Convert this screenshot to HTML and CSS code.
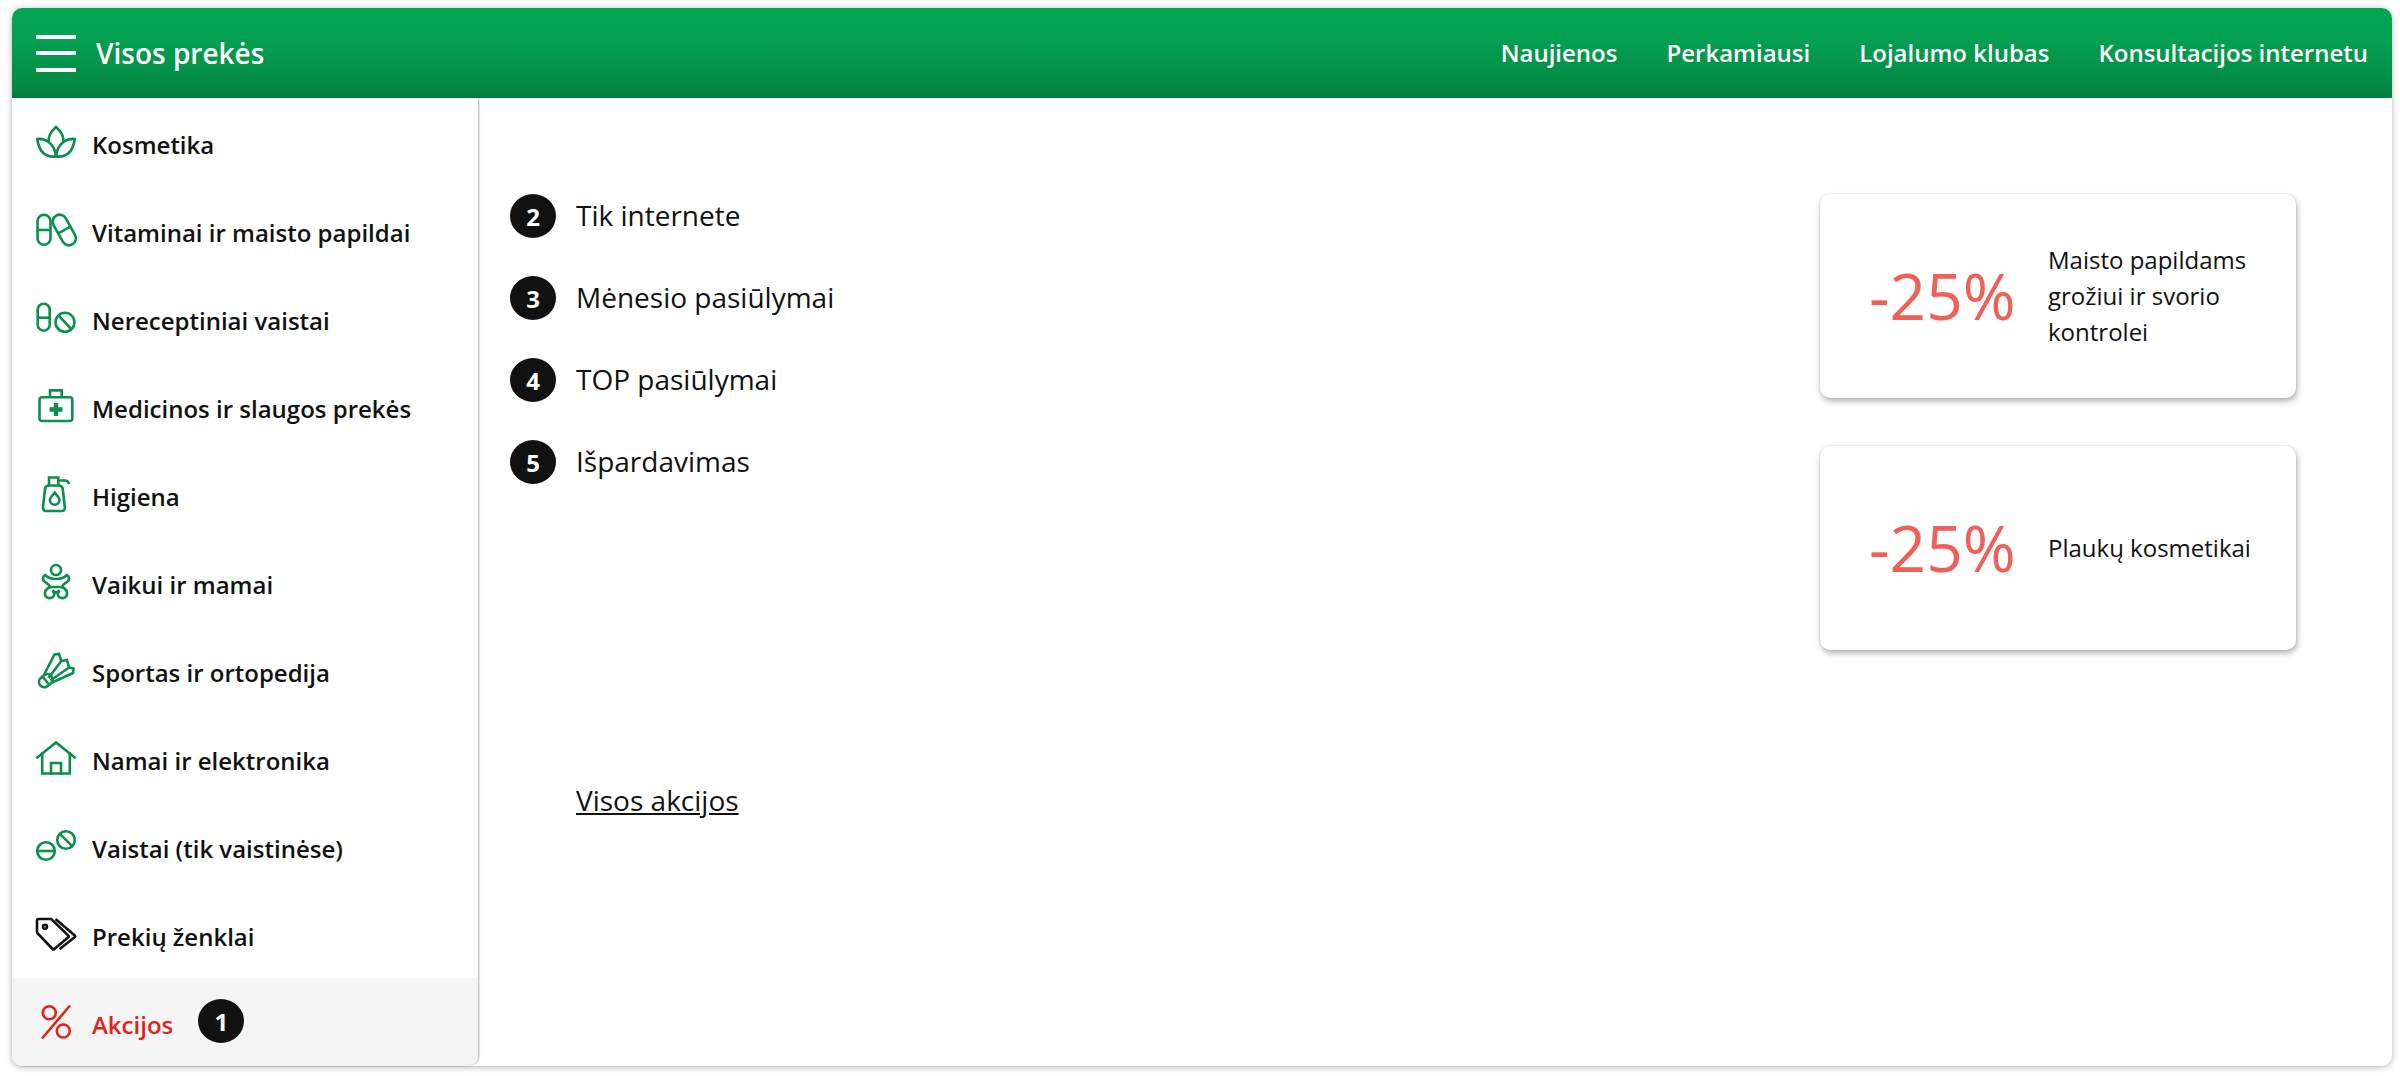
FILE: index.html
```html
<!DOCTYPE html>
<html lang="lt">
<head>
<meta charset="utf-8">
<title>Visos prekės</title>
<link rel="stylesheet" href="styles.css">
</head>
<body>
<div class="panel">
  <header class="topbar">
    <div class="brand">
      <span class="burger"><i></i><i></i><i></i></span>
      <span class="brand-text">Visos prekės</span>
    </div>
    <nav class="topnav">
      <a>Naujienos</a><a>Perkamiausi</a><a>Lojalumo klubas</a><a>Konsultacijos internetu</a>
    </nav>
  </header>
  <div class="body">
    <aside class="side">
      <a class="item"><svg class="ico" viewBox="0 0 40 40"><path d="M1.300 17C9 16 18.500 21 20 34.500 10 35.500 3 30 1.300 17z"/><path d="M38.700 17C31 16 21.500 21 20 34.500 30 35.500 37 30 38.700 17z"/><path d="M12.800 19.500C12 14 15.500 9 20 5c4.500 4 8 9 7.200 14.500"/></svg><span>Kosmetika</span></a>
      <a class="item"><svg class="ico" viewBox="0 0 40 40"><rect x="1.500" y="4.700" width="13" height="30" rx="6.500"/><path d="M1.500 20h13"/><rect x="21.300" y="3.500" width="14" height="33" rx="7" transform="rotate(-29 28.300 20)"/><path d="M21.800 23.600l12.600-7"/></svg><span>Vitaminai ir maisto papildai</span></a>
      <a class="item"><svg class="ico" viewBox="0 0 40 40"><rect x="1.700" y="5.700" width="12" height="27" rx="6"/><path d="M1.700 19.700h12"/><circle cx="29" cy="24.300" r="9.500"/><path d="M22.500 17.300l13 14"/></svg><span>Nereceptiniai vaistai</span></a>
      <a class="item"><svg class="ico" viewBox="0 0 40 40"><rect x="3.500" y="11.200" width="32.800" height="23.800" rx="2.500"/><path d="M14 11V4.400h11.700V11"/><path class="thick" d="M20 17v13M13.500 23.500h13"/></svg><span>Medicinos ir slaugos prekės</span></a>
      <a class="item"><svg class="ico" viewBox="0 0 40 40"><path d="M13 11.500h9.500c2.500 0 4 1.500 4.300 3.500l2 18c.2 2.500-1 4-3 4H10c-2 0-3-1.500-3-4l2-18c.3-2 2-3.500 4-3.500z"/><path d="M13 11.500V3.500h9.300v8"/><path d="M22.300 6.500h7c2 0 3 1.500 4 3.500"/><path d="M18.700 18.500c3 3.500 4.800 5.500 4.800 7.500a4.800 4.800 0 0 1-9.600 0c0-2 1.800-4 4.800-7.500z"/></svg><span>Higiena</span></a>
      <a class="item"><svg class="ico" viewBox="0 0 40 40"><circle cx="20" cy="8" r="5"/><path d="M9 13c2.500 2.500 6.500 4 11 4s8.500-1.500 11-4c2.500 1.500 2.500 5.500.5 6.700-2.700 1.500-4.500 2.500-5.500 5.300H14c-1-2.800-2.800-3.800-5.500-5.300C6.500 18.500 6.500 14.500 9 13z"/><path d="M14 25c-3 1.500-5.500 4.500-5 7.500.6 3.700 5.500 4.500 8 2.500 1.700-1.500 1.500-4.500-.5-6.500"/><path d="M26 25c3 1.500 5.500 4.500 5 7.500-.6 3.700-5.500 4.500-8 2.500-1.700-1.500-1.500-4.500.5-6.500"/><path d="M16.500 28.500c1 .8 2.300 1.500 3.500 2.300 1.200-.8 2.500-1.500 3.500-2.300"/></svg><span>Vaikui ir mamai</span></a>
      <a class="item"><svg class="ico" viewBox="0 0 40 40"><path d="M8 25L18.500 4.500l4.500-.5 2.300 7 5.700-1 2 7.500 4.500 1-.5 4.500L15 33"/><path d="M12.500 28L25.300 11M14.500 30.500L33 17.500"/><rect x="2.500" y="25.500" width="14.500" height="10.500" rx="5.200" transform="rotate(-40 9.700 30.700)"/><path d="M6.500 26.500l6.500 8"/></svg><span>Sportas ir ortopedija</span></a>
      <a class="item"><svg class="ico square" viewBox="0 0 40 40"><path d="M1.300 19.500L20 4.500l18.700 15"/><path d="M6.200 15.500V35.500h27.600V15.500"/><path d="M15 35.500V25h10v10.500"/></svg><span>Namai ir elektronika</span></a>
      <a class="item"><svg class="ico" viewBox="0 0 40 40"><circle cx="10" cy="25" r="8.800"/><path d="M1.200 25h17.600"/><circle cx="30" cy="14" r="8.800"/><path d="M23.800 7.800l12.400 12.400"/></svg><span>Vaistai (tik vaistinėse)</span></a>
      <a class="item"><svg class="ico dark" viewBox="0 0 40 40"><path d="M1 6.500C1 5.700 1.700 5 2.500 5H15.300L32.300 21.600c.5.500.5 1.200 0 1.700L18.300 35c-.5.500-1.200.5-1.700 0L1.600 19.300C1.200 19 1 18.500 1 18z"/><circle cx="9" cy="12.700" r="2"/><path d="M19.500 5l19.300 16.500c.5.500.5 1.100 0 1.600L23.500 35.300"/></svg><span>Prekių ženklai</span></a>
      <a class="item active"><svg class="ico red" viewBox="0 0 40 40"><path d="M34 3.500L6 36.500"/><circle cx="13.300" cy="10.700" r="6.500"/><circle cx="27.300" cy="29" r="6.500"/></svg><span>Akcijos</span><b class="dot dot-side">1</b></a>
    </aside>
    <main class="main">
      <div class="left">
        <ul class="list">
          <li><b class="dot">2</b><span>Tik internete</span></li>
          <li><b class="dot">3</b><span>Mėnesio pasiūlymai</span></li>
          <li><b class="dot">4</b><span>TOP pasiūlymai</span></li>
          <li><b class="dot">5</b><span>Išpardavimas</span></li>
        </ul>
        <a class="all">Visos akcijos</a>
      </div>
      <div class="cards">
        <div class="card"><span class="pct">-25%</span><p>Maisto papildams grožiui ir svorio kontrolei</p></div>
        <div class="card"><span class="pct">-25%</span><p>Plaukų kosmetikai</p></div>
      </div>
    </main>
  </div>
</div>
</body>
</html>
```
FILE: styles.css
```css
* { box-sizing: border-box; }
html, body { height: 100%; }
body {
  margin: 0;
  padding: 8px 8px 10px 12px;
  background: #fff;
  font-family: "Open Sans", sans-serif;
  color: #111;
}
.panel {
  width: 2380px;
  height: 1058px;
  display: flex;
  flex-direction: column;
  border-radius: 10px;
  background: #fff;
  box-shadow: 0 1px 6px rgba(0,0,0,.3);
}
.topbar {
  height: 90px;
  flex: none;
  display: flex;
  align-items: center;
  justify-content: space-between;
  padding: 0 24px;
  background: linear-gradient(#04a654 0%, #04a052 35%, #038a45 85%, #037f40 100%);
  border-radius: 10px 10px 0 0;
  color: #fff;
}
.brand { display: flex; align-items: center; gap: 20px; }
.burger { display: flex; flex-direction: column; gap: 12.5px; width: 40px; }
.burger i { display: block; height: 4px; background: #fff; }
.brand-text { font-size: 28px; font-weight: 600; line-height: 40px; }
.topnav { display: flex; gap: 49px; }
.topnav a { font-size: 24px; font-weight: 600; line-height: 32px; }
.body { flex: 1; display: flex; min-height: 0; }
.side {
  width: 466px;
  flex: none;
  display: flex;
  flex-direction: column;
  box-shadow: 1px 0 2px rgba(0,0,0,.32);
  border-radius: 0 0 10px 10px;
  overflow: hidden;
}
.item {
  height: 88px;
  display: flex;
  align-items: center;
  padding: 0 24px;
  font-size: 24px;
  font-weight: 600;
  color: #111;
}
.item span { margin-left: 16px; padding-top: 4px; }
.ico {
  width: 40px;
  height: 40px;
  flex: none;
  fill: none;
  stroke: #0b8f4a;
  stroke-width: 2.6;
  overflow: visible;
}
.ico .thick { stroke-width: 4.4; }
.ico.square { stroke-linejoin: miter; stroke-linecap: square; }
.ico.dark { stroke: #111; }
.ico.red { stroke: #e2231a; }
.item.active { background: #f5f5f5; color: #e2231a; }
.dot {
  width: 46px;
  height: 44px;
  flex: none;
  display: flex;
  align-items: center;
  justify-content: center;
  border-radius: 50%;
  background: #111;
  color: #fff;
  font-size: 24px;
  font-weight: 700;
}
.item .dot-side { margin-left: 25px; margin-top: -2px; }
.main {
  flex: 1;
  display: flex;
  justify-content: space-between;
  padding: 96px 96px 0 30px;
  margin-left: 2px;
}
.left { display: flex; flex-direction: column; }
.list { list-style: none; margin: 0; padding: 0; display: flex; flex-direction: column; gap: 38px; }
.list li { display: flex; align-items: center; gap: 20px; height: 44px; font-size: 28px; color: #111; }
.list li span { padding-bottom: 3px; }
.all {
  margin: 297px 0 0 66px;
  font-size: 28px;
  line-height: 38px;
  color: #111;
  text-decoration: underline;
}
.cards { display: flex; flex-direction: column; gap: 48px; }
.card {
  width: 476px;
  height: 204px;
  display: flex;
  align-items: center;
  padding-left: 49px;
  border-radius: 10px;
  background: #fff;
  box-shadow: 1px 3px 6px rgba(0,0,0,.32), 0 0 2px rgba(0,0,0,.12);
}
.pct { width: 179px; flex: none; font-size: 64px; color: #ee6058; line-height: 80px; }
.card p { margin: 0; width: 220px; font-size: 24px; line-height: 36px; color: #111; }
```
